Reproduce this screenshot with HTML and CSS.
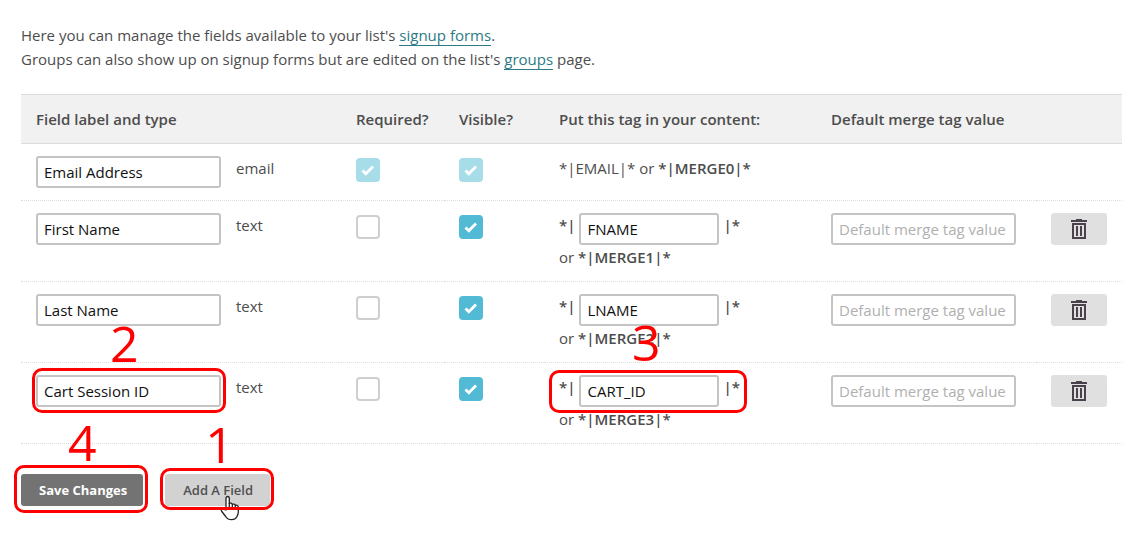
FILE: index.html
```html
<!DOCTYPE html>
<html lang="en">
<head>
<meta charset="utf-8">
<title>List fields</title>
<link rel="stylesheet" href="styles.css">
</head>
<body>
<svg class="sprite" aria-hidden="true">
  <symbol id="trash" viewBox="0 0 16 20">
    <path fill="currentColor" d="M5 0h6v1h5v2H0V1h5z"/>
    <path fill="currentColor" fill-rule="evenodd" d="M1 4h14v16H1zM3 6v12h10V6z"/>
    <path fill="currentColor" d="M5 7h2v10H5zM9 7h2v10H9z"/>
  </symbol>
</svg>
<main class="page">
  <p class="intro">Here you can manage the fields available to your list's <a href="#forms">signup forms</a>.<br>
  Groups can also show up on signup forms but are edited on the list's <a href="#groups">groups</a> page.</p>

  <form class="fields-form">
    <table class="fields">
      <colgroup>
        <col class="col-label"><col class="col-required"><col class="col-visible"><col class="col-tag"><col class="col-default"><col class="col-action">
      </colgroup>
      <thead>
        <tr>
          <th scope="col">Field label and type</th>
          <th scope="col">Required?</th>
          <th scope="col">Visible?</th>
          <th scope="col">Put this tag in your content:</th>
          <th scope="col">Default merge tag value</th>
          <th></th>
        </tr>
      </thead>
      <tbody>
        <tr>
          <td><div class="label-cell"><span class="mark"><input class="text" type="text" aria-label="Field label" value="Email Address"></span><span>email</span></div></td>
          <td><input class="check" type="checkbox" aria-label="Email required" checked disabled></td>
          <td><input class="check" type="checkbox" aria-label="Email visible" checked disabled></td>
          <td>*|EMAIL|* or <b>*|MERGE0|*</b></td>
          <td></td>
          <td></td>
        </tr>
        <tr>
          <td><div class="label-cell"><span class="mark"><input class="text" type="text" aria-label="Field label" value="First Name"></span><span>text</span></div></td>
          <td><input class="check" type="checkbox" aria-label="First name required"></td>
          <td><input class="check" type="checkbox" aria-label="First name visible" checked></td>
          <td><div class="tag-cell"><b>*|</b><input class="text tag" type="text" aria-label="Merge tag" value="FNAME"><b>|*</b></div><div>or <b>*|MERGE1|*</b></div></td>
          <td><input class="text" type="text" aria-label="Default value" placeholder="Default merge tag value"></td>
          <td><button class="delete" type="button" aria-label="Delete First Name"><svg class="icon"><use href="#trash"/></svg></button></td>
        </tr>
        <tr>
          <td><div class="label-cell"><span class="mark"><input class="text" type="text" aria-label="Field label" value="Last Name"></span><span>text</span></div></td>
          <td><input class="check" type="checkbox" aria-label="Last name required"></td>
          <td><input class="check" type="checkbox" aria-label="Last name visible" checked></td>
          <td><div class="tag-cell"><b>*|</b><input class="text tag" type="text" aria-label="Merge tag" value="LNAME"><b>|*</b></div><div>or <b>*|MERGE2|*</b></div></td>
          <td><input class="text" type="text" aria-label="Default value" placeholder="Default merge tag value"></td>
          <td><button class="delete" type="button" aria-label="Delete Last Name"><svg class="icon"><use href="#trash"/></svg></button></td>
        </tr>
        <tr>
          <td><div class="label-cell"><span class="mark"><input class="text" type="text" aria-label="Field label" value="Cart Session ID"><span class="outline outline-label"><span class="step">2</span></span></span><span>text</span></div></td>
          <td><input class="check" type="checkbox" aria-label="Cart session required"></td>
          <td><input class="check" type="checkbox" aria-label="Cart session visible" checked></td>
          <td><div class="tag-cell mark"><b>*|</b><input class="text tag" type="text" aria-label="Merge tag" value="CART_ID"><b>|*</b><span class="outline outline-tag"><span class="step">3</span></span></div><div>or <b>*|MERGE3|*</b></div></td>
          <td><input class="text" type="text" aria-label="Default value" placeholder="Default merge tag value"></td>
          <td><button class="delete" type="button" aria-label="Delete Cart Session ID"><svg class="icon"><use href="#trash"/></svg></button></td>
        </tr>
      </tbody>
    </table>

    <div class="actions">
      <span class="mark"><button class="btn btn-save" type="button">Save Changes</button><span class="outline outline-save"><span class="step">4</span></span></span>
      <span class="mark"><button class="btn btn-add" type="button">Add A Field</button>
        <svg class="pointer" viewBox="0 0 20 26" aria-hidden="true"><path d="M6 15V3.5C6 .8 9.3.8 9.3 3.5V8.500c1-.8 3-.5 3 1 1-.8 3-.4 3 1 1-.6 3-.2 3 1.600V17c0 2.500-1 3.500-1.600 5-.9 1.800-2.500 2.700-5 2.700-3 0-4.700-1-6-3.200L1.800 16.500C.6 14.500 2.400 13.200 4 14.400z" fill="#fff" stroke="#222" stroke-width="1.300" stroke-linejoin="round"/><path d="M9.300 8v5M12.300 9.500V13M15.300 10.500V13" fill="none" stroke="#222" stroke-width="1.300"/></svg>
        <span class="outline outline-add"><span class="step">1</span></span>
      </span>
    </div>
  </form>
</main>
</body>
</html>
```
FILE: styles.css
```css
* { box-sizing: border-box; }

body {
  margin: 0;
  background: #fff;
  color: #4d4d4d;
  font: 15px/24px "Open Sans", sans-serif;
}

.sprite { position: absolute; width: 0; height: 0; }

.page { padding: 23px 19px 24px 21px; }

.intro { margin: 0 0 23px; }

.intro a {
  color: #2c7a85;
  text-decoration: none;
  border-bottom: 1px solid #2c7a85;
}

b { font-weight: 600; }

.fields {
  width: 100%;
  table-layout: fixed;
  border-collapse: separate;
  border-spacing: 0;
}

.col-required { width: 103px; }
.col-visible { width: 100px; }
.col-tag { width: 272px; }
.col-default { width: 220px; }
.col-action { width: 86px; }

.fields th {
  padding: 12px 0 12px 15px;
  background: #f1f1f1;
  border-top: 1px solid #dcdcdc;
  border-bottom: 1px solid #dcdcdc;
  font-weight: 600;
  text-align: left;
}

.fields td {
  padding: 12px 0 12px 15px;
  border-bottom: 1px dotted #dedede;
  vertical-align: top;
}

.label-cell, .tag-cell { display: flex; align-items: flex-start; }
.label-cell { gap: 15px; }
.tag-cell { gap: 4px; }

.text {
  display: block;
  width: 185px;
  height: 32px;
  margin: 0;
  padding: 0 6px;
  border: 2px solid #c4c4c4;
  border-radius: 3px;
  background: #fff;
  color: #111;
  font: inherit;
}

.text::placeholder { color: #b0b0b0; opacity: 1; }
.tag { width: 140px; }

.check {
  appearance: none;
  display: block;
  width: 24px;
  height: 24px;
  margin: 2px 0 0;
  border: 2px solid #cfcfcf;
  border-radius: 4px;
  background: #fff;
}

.check:checked {
  border-color: #52bad5;
  background: #52bad5 url("data:image/svg+xml,%3Csvg xmlns='http://www.w3.org/2000/svg' viewBox='0 0 20 20'%3E%3Cpath d='M4.500 10.500l3.300 3.200 7.200-7.200' fill='none' stroke='white' stroke-width='2.800'/%3E%3C/svg%3E") center / 20px no-repeat;
}

.check:disabled { opacity: .5; }

.delete {
  display: flex;
  align-items: center;
  justify-content: center;
  width: 56px;
  height: 32px;
  padding: 0;
  border: 0;
  border-radius: 3px;
  background: #e0e0e0;
  color: #49414b;
}

.icon { width: 16px; height: 20px; }

.actions { display: flex; gap: 22px; padding-top: 30px; }

.btn {
  display: block;
  height: 32px;
  padding: 0 17px 0 18px;
  border: 0;
  border-radius: 3px;
  font: 600 13px/32px "Open Sans", sans-serif;
}

.btn-save { padding-right: 16px; background: #737373; color: #fff; font-weight: 700; }
.btn-add { background: #d2d2d2; color: #505050; }

/* Numbered walkthrough outlines drawn over the controls */
.mark { position: relative; }

.outline {
  position: absolute;
  border: 3px solid #f00;
  border-radius: 10px;
  pointer-events: none;
}

.outline-label { inset: -7px -5px -6px -4px; }
.outline-tag { inset: -5px auto -6px -10px; width: 198px; }
.outline-save { inset: -9px -5px -7px -7px; }
.outline-add { inset: -6px -4px -4px -5px; }

.step {
  position: absolute;
  color: #f00;
  font-size: 50px;
  line-height: 50px;
}

.outline-label .step { top: -53px; left: 75px; }
.outline-tag .step { top: -56px; left: 80px; }
.outline-save .step { top: -51px; left: 51px; }
.outline-add .step { top: -52px; left: 42px; }

.pointer {
  position: absolute;
  top: 21px;
  left: 55px;
  width: 20px;
  height: 26px;
}
```
